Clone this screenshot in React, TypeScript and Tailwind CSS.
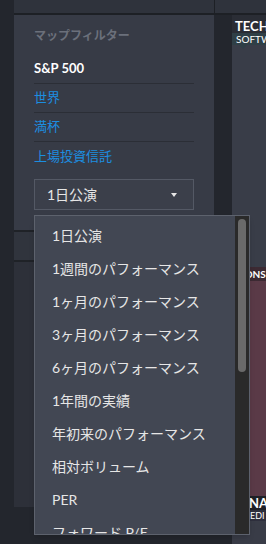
const items = [
  "1日公演",
  "1週間のパフォーマンス",
  "1ヶ月のパフォーマンス",
  "3ヶ月のパフォーマンス",
  "6ヶ月のパフォーマンス",
  "1年間の実績",
  "年初来のパフォーマンス",
  "相対ボリューム",
  "PER",
  "フォワード P/E",
];

const filters = ["世界", "満杯", "上場投資信託"];

export default function App() {
  return (
    <div
      className="relative flex h-[544px] w-[266px] overflow-hidden bg-[#23262d]"
      style={{ fontFamily: 'Lato, "Noto Sans CJK JP", sans-serif' }}
    >
      {/* far left strip */}
      <div className="w-[14px] shrink-0" />

      {/* filter column */}
      <div className="flex w-[200px] shrink-0 flex-col">
        <div className="h-[13px] bg-[#2f333c]" />
        <div className="h-[2px] bg-[#1d2025]" />

        <div className="flex h-[215px] flex-col bg-[#373b46] px-5 pt-[13px]">
          <div className="h-[16px] text-[12px] font-bold leading-[16px] text-[#6b707b]">
            マップフィルター
          </div>
          <div className="mt-[11px] flex flex-col">
            <div className="flex h-[29px] items-center border-b border-[#2b2e36] text-[13px] font-bold text-white">
              S&amp;P 500
            </div>
            {filters.map((f, i) => (
              <div
                key={f}
                className={`flex h-[29px] items-center text-[13px] text-[#1c8ee0] ${
                  i < filters.length - 1 ? "border-b border-[#2b2e36]" : ""
                }`}
              >
                {f}
              </div>
            ))}
          </div>
          <div className="mt-[8px] flex h-[31px] items-center justify-between border border-[#545965] bg-[#3b3f4a] pl-3 pr-[16px] text-[14px] text-[#e6e6e6]">
            <span>1日公演</span>
            <span className="h-0 w-0 border-x-[3.5px] border-t-[4px] border-x-transparent border-t-[#e6e6e6]" />
          </div>
        </div>

        <div className="h-[2px] bg-[#1f2227]" />
        <div className="h-[28px] bg-[#30343d]" />
        <div className="h-[2px] bg-[#1f2227]" />
        <div className="h-[245px] bg-[#2d3039]" />
      </div>

      {/* right column with treemap */}
      <div className="flex min-w-0 flex-1 flex-col">
        <div className="h-[13px] border-l border-[#1d2025] bg-[#2f333c]" />
        <div className="h-[2px] bg-[#1d2025]" />
        <div className="flex min-w-0 flex-1 pl-[18px]">
          <div className="flex min-w-0 flex-1 flex-col bg-[#2a2d35]">
            <div className="h-[18px] overflow-hidden whitespace-nowrap pl-[3px] pt-[4px] text-[13px] font-bold leading-[14px] text-white">
              TECH
            </div>
            <div className="relative h-[12px] whitespace-nowrap bg-[#2f3f46] pl-[4px] text-[10px] leading-[12px] text-white">
              <div className="overflow-hidden">SOFTW</div>
              <span className="absolute left-[7px] top-[12px] h-0 w-0 border-x-[4px] border-t-[4px] border-x-transparent border-t-[#2f3f46]" />
            </div>
            <div className="h-[222px] bg-[#393d48]" />
            <div className="h-[14px] overflow-hidden whitespace-nowrap bg-[#3c2a33] pl-[6px] text-[10px] font-bold leading-[14px] text-white">
              CONS
            </div>
            <div className="h-[215px] bg-[#5a3a47]" />
            <div className="h-[14px] overflow-hidden whitespace-nowrap bg-[#1f2127] pl-[17px] text-[13px] font-bold leading-[14px] text-white">
              NA
            </div>
            <div className="h-[11px] overflow-hidden whitespace-nowrap bg-[#2e2f3d] pl-[18px] text-[9px] leading-[11px] text-white">
              EDI
            </div>
            <div className="flex-1 bg-[#393c47]" />
          </div>
        </div>
      </div>

      {/* dropdown menu */}
      <div className="absolute left-[34px] top-[215px] flex h-[320px] w-[216px] border border-[#5d626d] bg-[#424753] shadow-md">
        <div className="flex-1 overflow-hidden pt-[3px]">
          {items.map((it) => (
            <div
              key={it}
              className="flex h-[33px] items-center whitespace-nowrap pl-[17px] text-[14px] text-[#e6e6e6]"
            >
              {it}
            </div>
          ))}
        </div>
        <div className="w-[14px] bg-[#2a2a2a] pt-[3px]">
          <div className="ml-[3px] h-[153px] w-[8px] rounded-full bg-[#6a6a6a]" />
        </div>
      </div>
    </div>
  );
}
